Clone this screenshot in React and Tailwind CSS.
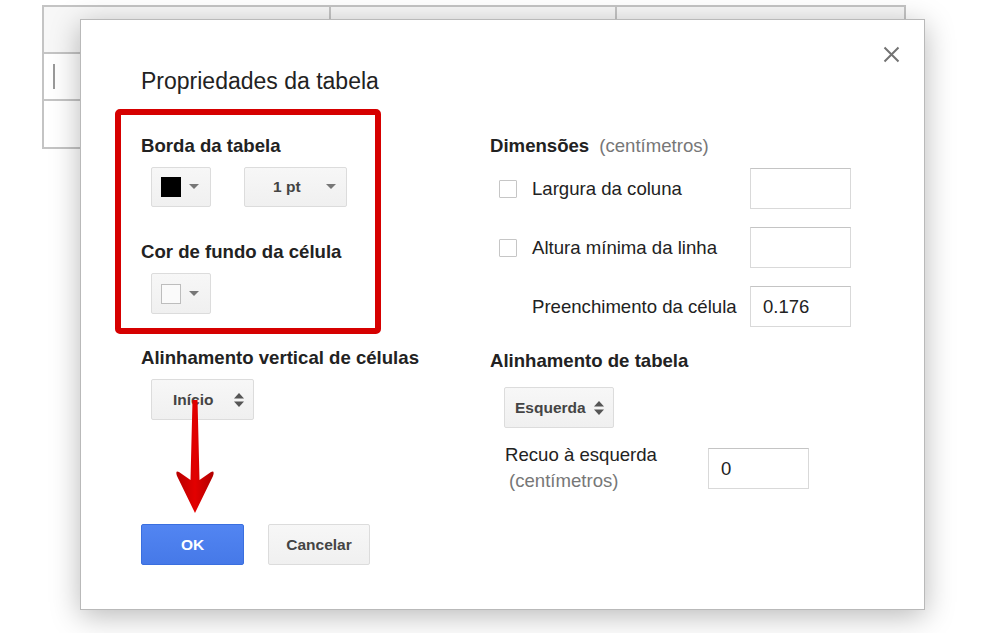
import React from "react";

const font = { fontFamily: '"Liberation Sans", Arial, sans-serif' };

function Caret() {
  return (
    <svg width="10" height="6" viewBox="0 0 10 6" className="shrink-0">
      <path d="M0 0 L10 0 L5 5 Z" fill="#777" />
    </svg>
  );
}

function UpDown() {
  return (
    <svg width="12" height="16" viewBox="0 0 12 16" className="shrink-0">
      <path d="M1 6.5 L6 1 L11 6.5 Z" fill="#555" />
      <path d="M1 9.5 L6 15 L11 9.5 Z" fill="#555" />
    </svg>
  );
}

function GrayBtn({ className = "", children }) {
  return (
    <div
      className={`flex items-center rounded-[2px] border border-[#dcdcdc] bg-gradient-to-b from-[#f7f7f7] to-[#f0f0f0] text-[15.5px] font-bold text-[#444] ${className}`}
    >
      {children}
    </div>
  );
}

function Input({ value = "", className = "" }) {
  return (
    <div
      className={`flex h-[41px] w-[101px] items-center border border-[#d9d9d9] border-t-[#c4c4c4] bg-white pl-[12px] text-[18.5px] text-[#222] ${className}`}
    >
      {value}
    </div>
  );
}

function Check() {
  return <div className="h-[18px] w-[18px] rounded-[1px] border border-[#c6c6c6] bg-white" />;
}

export default function App() {
  return (
    <div className="relative h-[633px] w-[1000px] overflow-hidden bg-white" style={font}>
      {/* background table */}
      <div className="ml-[42px] mt-[5px] grid w-[864px] grid-cols-3 border-2 border-[#c4c4c4]">
        <div className="h-[47px] border-r-2 border-b-2 border-[#c4c4c4] bg-[#f7f7f7]" />
        <div className="h-[47px] border-r-2 border-b-2 border-[#c4c4c4] bg-[#f7f7f7]" />
        <div className="h-[47px] border-b-2 border-[#c4c4c4] bg-[#f7f7f7]" />
        <div className="flex h-[47px] items-center border-r-2 border-b-2 border-[#c4c4c4] pl-[9px]">
          <div className="h-[25px] w-[2px] bg-[#9a9a9a]" />
        </div>
        <div className="h-[47px] border-r-2 border-b-2 border-[#c4c4c4]" />
        <div className="h-[47px] border-b-2 border-[#c4c4c4]" />
        <div className="h-[46px] border-r-2 border-[#c4c4c4]" />
        <div className="h-[46px] border-r-2 border-[#c4c4c4]" />
        <div className="h-[46px]" />
      </div>

      {/* dialog */}
      <div className="absolute left-[80px] top-[19px] h-[591px] w-[845px] border border-[#b9b9b9] bg-white shadow-[0_6px_28px_rgba(0,0,0,0.28)]">
        {/* close */}
        <svg className="absolute right-[24px] top-[26px]" width="17" height="17" viewBox="0 0 17 17">
          <path d="M1.5 1.5 L15.5 15.5 M15.5 1.5 L1.5 15.5" stroke="#737373" strokeWidth="2" />
        </svg>

        <div className="pl-[60px] pt-[47px] text-[23px] leading-[28px] text-[#222]">Propriedades da tabela</div>

        <div className="flex pl-[34px] pt-[14px]">
          {/* left column */}
          <div className="flex w-[375px] flex-col">
            <div className="flex h-[225px] w-[266px] flex-col rounded-[5px] border-[6px] border-[#d60000] pl-[20px] pt-[20px]">
              <div className="text-[18.6px] font-bold leading-[22px] text-[#222]">Borda da tabela</div>
              <div className="ml-[10px] mt-[10px] flex gap-[33px]">
                <GrayBtn className="h-[40px] w-[60px] gap-[8px] pl-[9px]">
                  <div className="h-[20px] w-[20px] bg-black" />
                  <Caret />
                </GrayBtn>
                <GrayBtn className="h-[40px] w-[103px] justify-between pl-[28px] pr-[10px]">
                  <span>1 pt</span>
                  <Caret />
                </GrayBtn>
              </div>
              <div className="mt-[34px] text-[18.6px] font-bold leading-[22px] text-[#222]">Cor de fundo da célula</div>
              <div className="ml-[10px] mt-[10px] flex">
                <GrayBtn className="h-[41px] w-[60px] gap-[8px] pl-[9px]">
                  <div className="h-[20px] w-[20px] border border-[#bdbdbd] bg-[#fafafa]" />
                  <Caret />
                </GrayBtn>
              </div>
            </div>
            <div className="ml-[26px] mt-[13px] text-[18.6px] font-bold leading-[22px] text-[#222]">
              Alinhamento vertical de células
            </div>
            <div className="ml-[36px] mt-[10px] flex">
              <GrayBtn className="h-[41px] w-[103px] justify-between pl-[21px] pr-[8px]">
                <span>Início</span>
                <UpDown />
              </GrayBtn>
            </div>
          </div>

          {/* right column */}
          <div className="flex flex-col pt-[26px]">
            <div className="flex items-baseline gap-[10px] text-[18.6px] leading-[22px]">
              <span className="font-bold text-[#222]">Dimensões</span>
              <span className="text-[#777]">(centímetros)</span>
            </div>
            <div className="mt-[11px] flex flex-col gap-[18px] text-[18.6px] text-[#222]">
              <div className="grid grid-cols-[42px_218px_101px] items-center">
                <div className="pl-[9px]"><Check /></div>
                <span>Largura da coluna</span>
                <Input />
              </div>
              <div className="grid grid-cols-[42px_218px_101px] items-center">
                <div className="pl-[9px]"><Check /></div>
                <span>Altura mínima da linha</span>
                <Input />
              </div>
              <div className="grid grid-cols-[42px_218px_101px] items-center">
                <div />
                <span>Preenchimento da célula</span>
                <Input value="0.176" />
              </div>
            </div>
            <div className="mt-[23px] text-[18.6px] font-bold leading-[22px] text-[#222]">Alinhamento de tabela</div>
            <div className="ml-[14px] mt-[15px] flex">
              <GrayBtn className="h-[41px] w-[110px] justify-between pl-[10px] pr-[8px]">
                <span>Esquerda</span>
                <UpDown />
              </GrayBtn>
            </div>
            <div className="ml-[15px] mt-[14px] flex items-start text-[18.6px] leading-[26px]">
              <div className="w-[203px]">
                <div className="text-[#222]">Recuo à esquerda</div>
                <div className="pl-[4px] text-[#777]">(centímetros)</div>
              </div>
              <Input value="0" className="mt-[6px]" />
            </div>
          </div>
        </div>

        {/* bottom buttons */}
        <div className="absolute left-[60px] top-[504px] flex gap-[24px]">
          <div className="flex h-[41px] w-[103px] items-center justify-center rounded-[2px] border border-[#3a6fdf] bg-gradient-to-b from-[#5285f2] to-[#4679e8] text-[15.5px] font-bold text-white">
            OK
          </div>
          <GrayBtn className="h-[41px] w-[102px] justify-center">Cancelar</GrayBtn>
        </div>
      </div>

      {/* red annotation arrow */}
      <svg className="absolute left-[170px] top-[398px]" width="50" height="118" viewBox="0 0 50 118">
        <defs>
          <linearGradient id="ag" x1="0" x2="1" y1="0" y2="0">
            <stop offset="0" stopColor="#b80000" />
            <stop offset="0.5" stopColor="#e30000" />
            <stop offset="1" stopColor="#b00000" />
          </linearGradient>
        </defs>
        <path
          d="M22.5 2 L27.5 2 L29.5 82 L41 74 Q45 72 43 78 L25 115 L7 78 Q5 72 9 74 L20.5 82 Z"
          fill="url(#ag)"
        />
      </svg>
    </div>
  );
}
